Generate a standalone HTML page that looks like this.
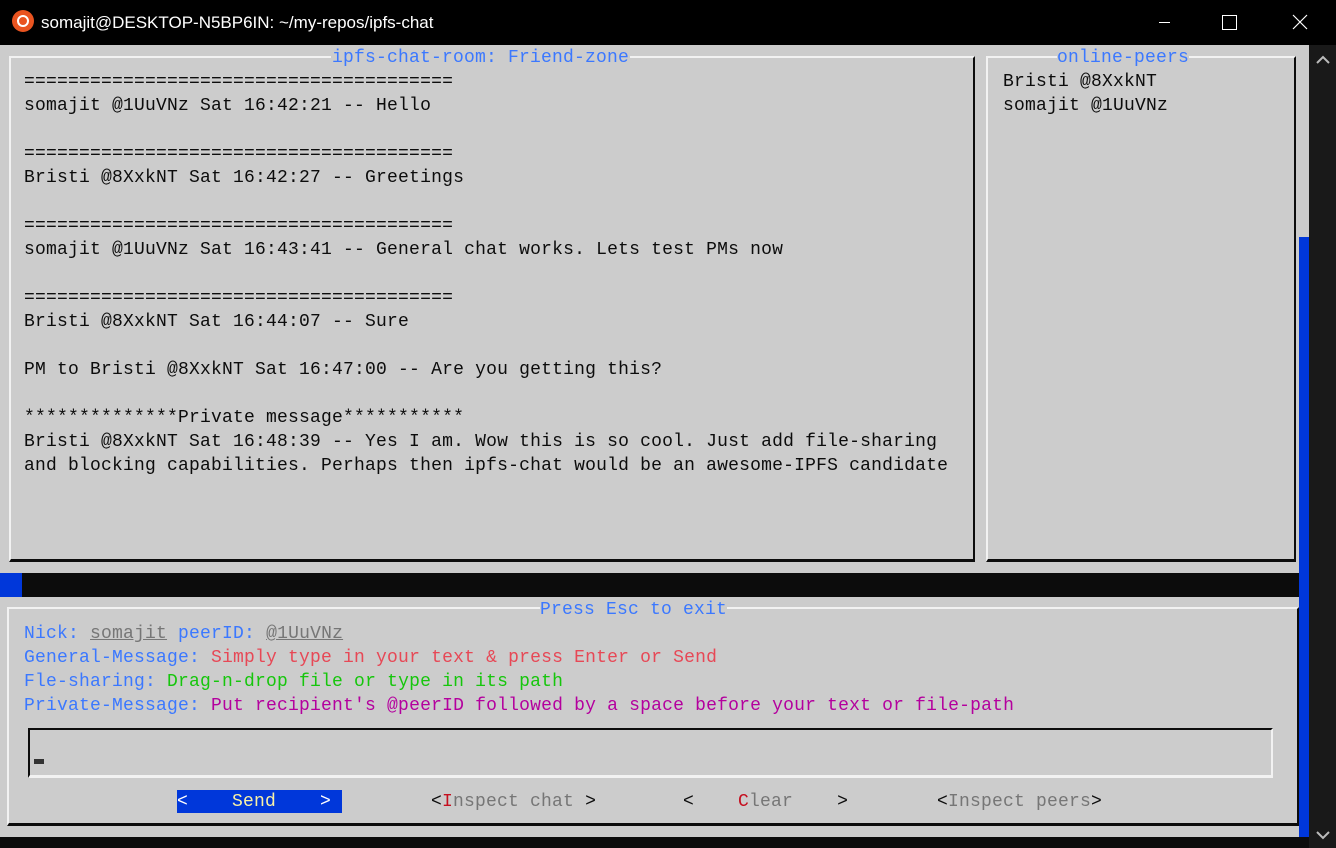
<!DOCTYPE html>
<html><head><meta charset="utf-8"><style>
*{margin:0;padding:0;box-sizing:border-box}
body{width:1336px;height:848px;overflow:hidden;background:#cccccc;position:relative;font-family:"Liberation Mono",monospace;font-size:18px;letter-spacing:0.2px;color:#0c0c0c}
.a{position:absolute;white-space:pre;line-height:24px;height:24px}
.bl{color:#3b78ff}.r{color:#e74856}.g{color:#16c60c}.m{color:#b4009e}.gr{color:#767676}
.box{position:absolute;border-top:2px solid #f2f2f2;border-left:2px solid #f2f2f2;border-right:2px solid #0c0c0c;border-bottom:3px solid #0c0c0c}
.lbl{background:#cccccc}
</style></head><body>
<div style="position:absolute;left:0;top:0;width:1336px;height:45px;background:#000"></div>
<div style="position:absolute;left:12px;top:10px;width:22px;height:22px;border-radius:50%;background:#e95420"></div>
<div style="position:absolute;left:17px;top:15px;width:12px;height:12px;border-radius:50%;border:2px solid #fff"></div>
<div class="a" style="left:41px;top:11px;color:#fff;font-family:'Liberation Sans',sans-serif;font-size:17px;letter-spacing:0">somajit@DESKTOP-N5BP6IN: ~/my-repos/ipfs-chat</div>
<div style="position:absolute;left:1159px;top:22px;width:11px;height:1px;background:#fff"></div>
<div style="position:absolute;left:1222px;top:15px;width:15px;height:15px;border:1px solid #fff"></div>
<div style="position:absolute;left:1292px;top:14px;width:16px;height:16px">
<svg width="16" height="16"><path d="M1 1L15 15M15 1L1 15" stroke="#fff" stroke-width="1.2"/></svg></div>

<div style="position:absolute;left:1309px;top:45px;width:27px;height:803px;background:#191919"></div>
<svg style="position:absolute;left:1316px;top:55px" width="14" height="10"><path d="M1 8L7 2L13 8" stroke="#bbb" stroke-width="2" fill="none"/></svg>
<svg style="position:absolute;left:1316px;top:830px" width="14" height="10"><path d="M1 2L7 8L13 2" stroke="#bbb" stroke-width="2" fill="none"/></svg>
<div style="position:absolute;left:1299px;top:237px;width:10px;height:600px;background:#0037da"></div>
<div style="position:absolute;left:0;top:837px;width:1309px;height:11px;background:#0c0c0c"></div>

<div class="box" style="left:9px;top:56px;width:966px;height:506px"></div>
<div class="box" style="left:986px;top:56px;width:310px;height:506px"></div>
<div style="position:absolute;left:0;top:573px;width:1299px;height:24px;background:#0c0c0c"></div>
<div style="position:absolute;left:0;top:573px;width:22px;height:24px;background:#0037da"></div>
<div class="box" style="left:7px;top:607px;width:1292px;height:219px"></div>
<div class="box" style="left:28px;top:728px;width:1245px;height:50px;border-top-color:#0c0c0c;border-left-color:#0c0c0c;border-right-color:#f2f2f2;border-bottom-color:#f2f2f2"></div>

<div class="a bl lbl" style="left:331px;top:46px;padding:0 1px">ipfs-chat-room: Friend-zone</div>
<div class="a bl lbl" style="left:1057px;top:46px">online-peers</div>
<div class="a bl lbl" style="left:540px;top:598px">Press Esc to exit</div>

<div class="a" style="left:24px;top:70px">=======================================</div>
<div class="a" style="left:24px;top:94px">somajit @1UuVNz Sat 16:42:21 -- Hello</div>
<div class="a" style="left:24px;top:142px">=======================================</div>
<div class="a" style="left:24px;top:166px">Bristi @8XxkNT Sat 16:42:27 -- Greetings</div>
<div class="a" style="left:24px;top:214px">=======================================</div>
<div class="a" style="left:24px;top:238px">somajit @1UuVNz Sat 16:43:41 -- General chat works. Lets test PMs now</div>
<div class="a" style="left:24px;top:286px">=======================================</div>
<div class="a" style="left:24px;top:310px">Bristi @8XxkNT Sat 16:44:07 -- Sure</div>
<div class="a" style="left:24px;top:358px">PM to Bristi @8XxkNT Sat 16:47:00 -- Are you getting this?</div>
<div class="a" style="left:24px;top:406px">**************Private message***********</div>
<div class="a" style="left:24px;top:430px">Bristi @8XxkNT Sat 16:48:39 -- Yes I am. Wow this is so cool. Just add file-sharing</div>
<div class="a" style="left:24px;top:454px">and blocking capabilities. Perhaps then ipfs-chat would be an awesome-IPFS candidate</div>

<div class="a" style="left:1003px;top:70px">Bristi @8XxkNT</div>
<div class="a" style="left:1003px;top:94px">somajit @1UuVNz</div>

<div class="a bl" style="left:24px;top:622px">Nick: <span class="gr" style="text-decoration:underline">somajit</span> peerID: <span class="gr" style="text-decoration:underline">@1UuVNz</span></div>
<div class="a bl" style="left:24px;top:646px">General-Message: <span class="r">Simply type in your text &amp; press Enter or Send</span></div>
<div class="a bl" style="left:24px;top:670px">Fle-sharing: <span class="g">Drag-n-drop file or type in its path</span></div>
<div class="a bl" style="left:24px;top:694px">Private-Message: <span class="m">Put recipient's @peerID followed by a space before your text or file-path</span></div>
<div style="position:absolute;left:34px;top:759px;width:10px;height:5px;background:#333"></div>

<div style="position:absolute;left:177px;top:790px;width:165px;height:23px;background:#0037da"></div>
<div class="a" style="left:177px;top:790px;color:#fff">&lt;    <span style="color:#f9f1a5">Send</span>    &gt;</div>
<div class="a gr" style="left:431px;top:790px"><span style="color:#0c0c0c">&lt;</span><span style="color:#c50f1f">I</span>nspect chat <span style="color:#0c0c0c">&gt;</span></div>
<div class="a gr" style="left:683px;top:790px"><span style="color:#0c0c0c">&lt;</span>    <span style="color:#c50f1f">C</span>lear    <span style="color:#0c0c0c">&gt;</span></div>
<div class="a gr" style="left:937px;top:790px"><span style="color:#0c0c0c">&lt;</span>Inspect peers<span style="color:#0c0c0c">&gt;</span></div>
</body></html>
